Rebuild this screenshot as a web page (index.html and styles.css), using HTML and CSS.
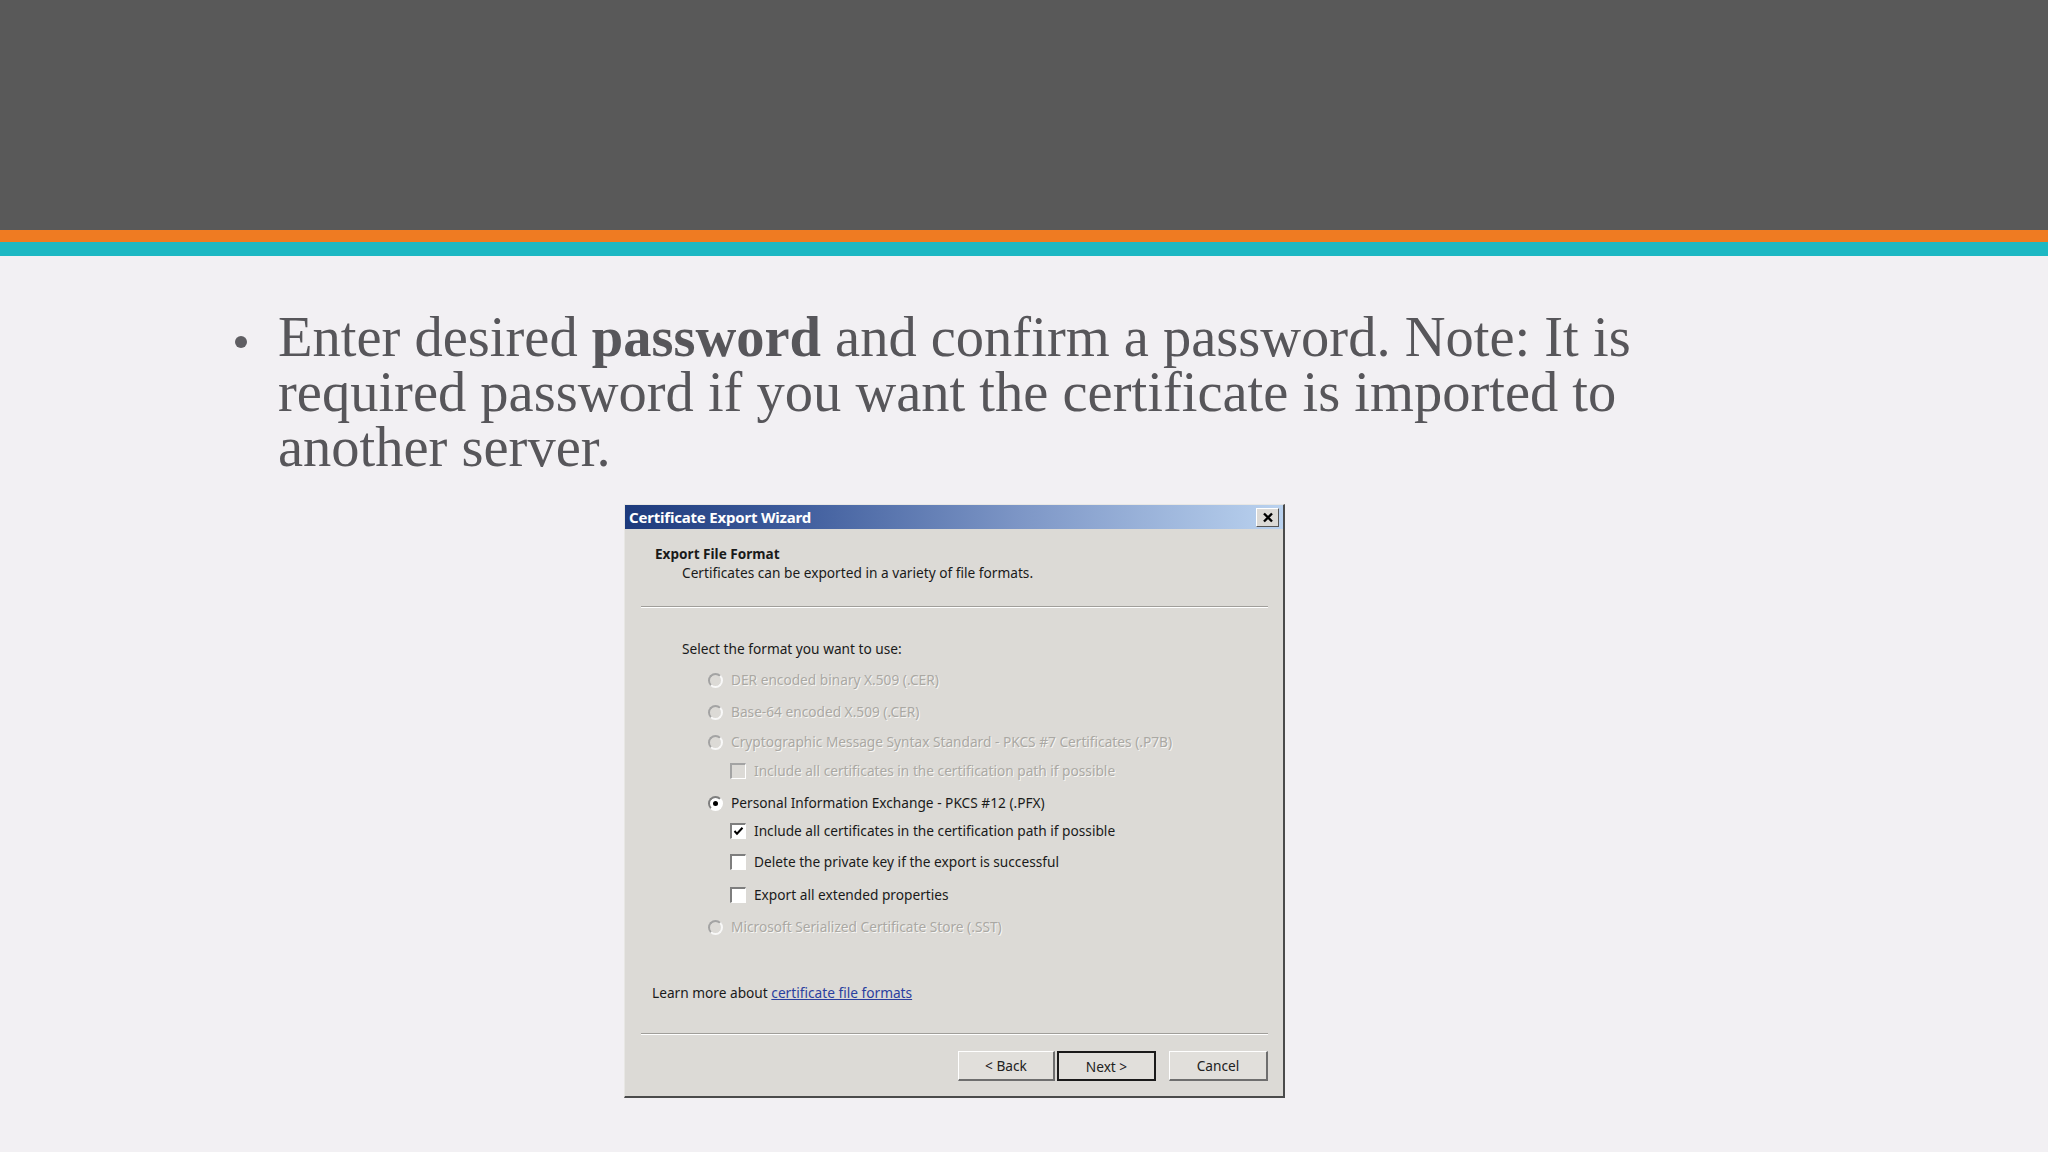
FILE: index.html
```html
<!DOCTYPE html>
<html>
<head>
<meta charset="utf-8">
<link rel="stylesheet" href="styles.css">
</head>
<body>
<div class="slide">
  <header class="top"></header>
  <div class="band-orange"></div>
  <div class="band-teal"></div>
  <main class="content">
    <ul class="bullets">
      <li><span class="line">Enter desired <b>password</b> and confirm a password. Note: It is</span><span class="line">required password if you want the certificate is imported to</span><span class="line">another server.</span></li>
    </ul>
    <div class="dialog">
      <div class="titlebar">
        <span class="title">Certificate Export Wizard</span>
        <span class="close"><svg width="12" height="11" viewBox="0 0 12 11"><path d="M2 1.5 L10 9.5 M10 1.5 L2 9.5" stroke="#000" stroke-width="2.4"/></svg></span>
      </div>
      <div class="head">
        <div class="head-title">Export File Format</div>
        <div class="head-sub">Certificates can be exported in a variety of file formats.</div>
      </div>
      <div class="sep"></div>
      <div class="body">
        <div class="prompt">Select the format you want to use:</div>
        <div class="options">
          <div class="row radio-row disabled"><span class="radio"></span><span>DER encoded binary X.509 (.CER)</span></div>
          <div class="row radio-row disabled"><span class="radio"></span><span>Base-64 encoded X.509 (.CER)</span></div>
          <div class="row radio-row disabled"><span class="radio"></span><span>Cryptographic Message Syntax Standard - PKCS #7 Certificates (.P7B)</span></div>
          <div class="row check-row disabled"><span class="check"></span><span>Include all certificates in the certification path if possible</span></div>
          <div class="row radio-row"><span class="radio on"></span><span>Personal Information Exchange - PKCS #12 (.PFX)</span></div>
          <div class="row check-row"><span class="check"><svg width="11" height="11" viewBox="0 0 11 11"><path d="M1.5 5 L4 7.8 L9.5 1.8" fill="none" stroke="#000" stroke-width="2"/></svg></span><span>Include all certificates in the certification path if possible</span></div>
          <div class="row check-row"><span class="check"></span><span>Delete the private key if the export is successful</span></div>
          <div class="row check-row"><span class="check"></span><span>Export all extended properties</span></div>
          <div class="row radio-row disabled"><span class="radio"></span><span>Microsoft Serialized Certificate Store (.SST)</span></div>
        </div>
        <div class="learn">Learn more about <a class="link">certificate file formats</a></div>
      </div>
      <div class="sep"></div>
      <div class="buttons">
        <span class="btn">&lt; Back</span>
        <span class="btn default">Next &gt;</span>
        <span class="btn cancel">Cancel</span>
      </div>
    </div>
  </main>
</div>
</body>
</html>
```
FILE: styles.css
```css
html, body {
  margin: 0;
  padding: 0;
}
body {
  width: 2048px;
  height: 1152px;
  overflow: hidden;
  background: #f2f0f3;
}
.slide {
  width: 2048px;
  height: 1152px;
}
.top {
  height: 230px;
  background: #595959;
}
.band-orange {
  height: 12px;
  background: #ef7b22;
}
.band-teal {
  height: 14px;
  background: #1db8c3;
}
.content {
  padding-top: 54px;
}
.bullets {
  margin: 0;
  padding: 0 0 0 278px;
  list-style: none;
  font-family: "Liberation Serif", "DejaVu Serif", serif;
  font-size: 56.5px;
  line-height: 55px;
  color: #57565a;
}
.bullets li {
  position: relative;
}
.bullets li::before {
  content: "";
  position: absolute;
  left: -43px;
  top: 26px;
  width: 12px;
  height: 12px;
  border-radius: 50%;
  background: #5f5e62;
}
.bullets .line {
  display: block;
  height: 55px;
  white-space: nowrap;
}
.bullets b {
  font-weight: bold;
}

/* dialog */
.dialog {
  margin: 29px 0 0 624px;
  width: 658px;
  height: 591px;
  background: #dcdad6;
  border-top: 1px solid #e8e7e4;
  border-left: 1px solid #e8e7e4;
  border-right: 2px solid #4b4b4b;
  border-bottom: 2px solid #4b4b4b;
  font-family: "Noto Sans", "Open Sans", sans-serif;
  font-size: 13.7px;
  color: #1a1a1a;
  display: flex;
  flex-direction: column;
}
.titlebar {
  height: 24px;
  flex: none;
  background: linear-gradient(90deg, #1d3a7c 0%, #3e5c9c 25%, #7d96c6 60%, #bad2ef 100%);
  display: flex;
  align-items: center;
  justify-content: space-between;
  padding: 0 4px 0 4px;
}
.title {
  color: #fff;
  font-weight: bold;
  font-size: 15px;
  letter-spacing: -0.2px;
}
.close {
  width: 21px;
  height: 17px;
  background: #dcdad6;
  border-top: 1px solid #fff;
  border-left: 1px solid #fff;
  border-right: 1px solid #555;
  border-bottom: 1px solid #555;
  display: flex;
  align-items: center;
  justify-content: center;
}
.head {
  padding: 15px 0 0 30px;
  height: 77px;
  box-sizing: border-box;
  flex: none;
}
.head-title {
  font-weight: bold;
  font-size: 13.6px;
  line-height: 19px;
}
.head-sub {
  padding-left: 27px;
  line-height: 20px;
}
.sep {
  margin: 0 15px 0 16px;
  height: 1px;
  flex: none;
  background: #a09e9a;
  border-bottom: 1px solid #fff;
}
.body {
  padding: 31px 0 0 57px;
  height: 425px;
  box-sizing: border-box;
  flex: none;
}
.prompt {
  line-height: 20px;
}
.options {
  margin-top: 11px;
  padding-left: 26px;
  display: grid;
  grid-template-rows: 32px 30px 29px 32px 28px 31px 33px 32px 30px;
}
.row {
  display: flex;
  align-items: center;
  height: 20px;
  line-height: 20px;
}
.check-row {
  padding-left: 22px;
}
.row.disabled {
  color: #aaa8a3;
  text-shadow: 1px 1px 0 #f7f6f4;
}
.radio {
  width: 11px;
  height: 11px;
  border-radius: 50%;
  border: 2px solid;
  border-color: #7e7e7e #ffffff #ffffff #7e7e7e;
  background: #ffffff;
  margin-right: 8px;
  position: relative;
  flex: none;
}
.disabled .radio {
  border-color: #a3a3a3 #f8f8f8 #f8f8f8 #a3a3a3;
  background: #dcdad6;
}
.radio.on::after {
  content: "";
  position: absolute;
  left: 3px;
  top: 3px;
  width: 5px;
  height: 5px;
  border-radius: 50%;
  background: #000;
}
.check {
  width: 13px;
  height: 13px;
  border-top: 2px solid #7e7e7e;
  border-left: 2px solid #7e7e7e;
  border-right: 1px solid #fff;
  border-bottom: 1px solid #fff;
  background: #fff;
  margin-right: 8px;
  display: flex;
  align-items: center;
  justify-content: center;
  flex: none;
}
.disabled .check {
  background: #dcdad6;
  border-top-color: #a3a3a3;
  border-left-color: #a3a3a3;
}
.learn {
  margin: 36px 0 0 -30px;
  line-height: 20px;
}
.link {
  color: #2b3f9f;
  text-decoration: underline;
}
.buttons {
  display: flex;
  justify-content: flex-end;
  padding: 16px 15px 0 0;
  gap: 2px;
}
.btn {
  width: 97px;
  height: 30px;
  box-sizing: border-box;
  display: flex;
  align-items: center;
  justify-content: center;
  background: #e1dfdb;
  border-top: 1px solid #ffffff;
  border-left: 1px solid #ffffff;
  border-right: 2px solid #6e6e6e;
  border-bottom: 2px solid #6e6e6e;
  color: #222;
  font-size: 13.7px;
}
.btn.default {
  width: 99px;
  border: 2px solid #1a1a1a;
}
.btn.cancel {
  margin-left: 11px;
  width: 99px;
}
```
